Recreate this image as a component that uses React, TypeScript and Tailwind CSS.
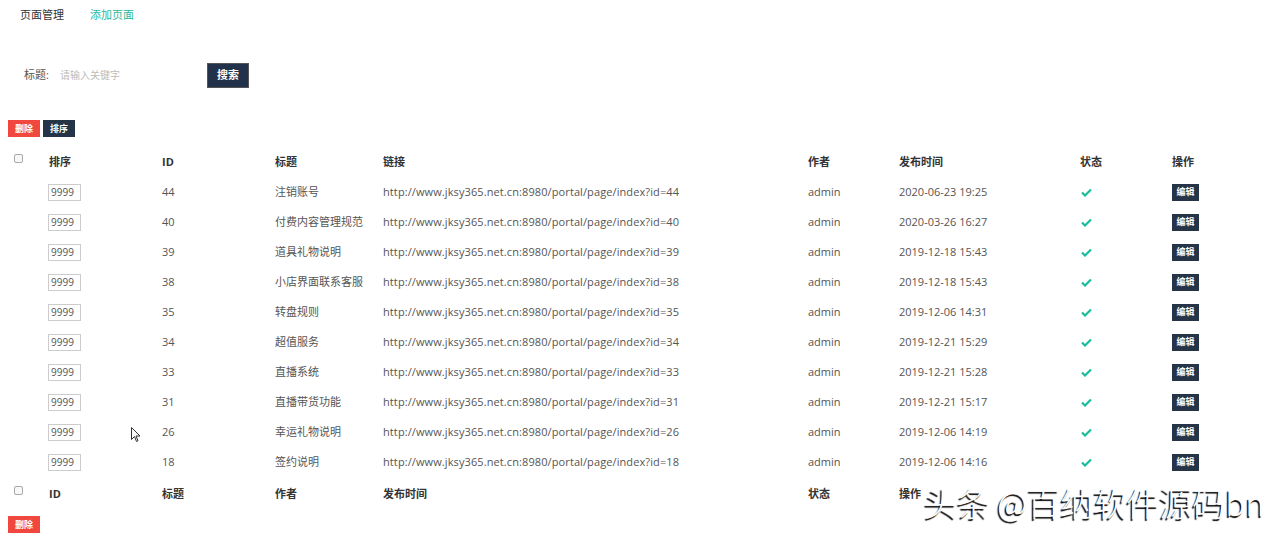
import React from 'react';

type Row = { id: number; title: string; date: string };

const rows: Row[] = [
  { id: 44, title: '注销账号', date: '2020-06-23 19:25' },
  { id: 40, title: '付费内容管理规范', date: '2020-03-26 16:27' },
  { id: 39, title: '道具礼物说明', date: '2019-12-18 15:43' },
  { id: 38, title: '小店界面联系客服', date: '2019-12-18 15:43' },
  { id: 35, title: '转盘规则', date: '2019-12-06 14:31' },
  { id: 34, title: '超值服务', date: '2019-12-21 15:29' },
  { id: 33, title: '直播系统', date: '2019-12-21 15:28' },
  { id: 31, title: '直播带货功能', date: '2019-12-21 15:17' },
  { id: 26, title: '幸运礼物说明', date: '2019-12-06 14:19' },
  { id: 18, title: '签约说明', date: '2019-12-06 14:16' },
];

const cols = 'grid grid-cols-[49px_113px_113px_108px_425px_91px_181px_92px_1fr] items-center';

const Check = () => (
  <span className="block w-[9px] h-[9px] border border-[#a9a9a9] rounded-[2px] bg-[#f7f7f7] ml-[14px] -mt-[8px]" />
);

const SmallBtn = ({ children, red }: { children: React.ReactNode; red?: boolean }) => (
  <span
    className={`inline-flex items-center justify-center h-[17px] w-[32px] text-[9px] font-bold text-white ${red ? 'bg-[#f0483e]' : 'bg-[#263447]'}`}
  >
    {children}
  </span>
);

export default function App() {
  return (
    <div className="relative w-[1280px] h-[546px] bg-white overflow-hidden text-[11px] text-[#555] font-['Open_Sans','Noto_Sans_CJK_SC',sans-serif]">
      {/* tabs */}
      <div className="flex gap-[26px] pl-[20px] pt-[7px] leading-[16px]">
        <span className="text-[#333]">页面管理</span>
        <span className="text-[#26b99a]">添加页面</span>
      </div>

      {/* search */}
      <div className="flex items-center mt-[40px] pl-[24px] h-[25px]">
        <span className="text-[#555] w-[36px]">标题:</span>
        <span className="text-[#bbb] text-[10px] w-[147px]">请输入关键字</span>
        <span className="inline-flex items-center justify-center w-[42px] h-[25px] bg-[#22324a] text-white font-bold border border-[#555]">搜索</span>
      </div>

      {/* actions */}
      <div className="flex gap-[3px] pl-[8px] mt-[32px]">
        <SmallBtn red>删除</SmallBtn>
        <SmallBtn>排序</SmallBtn>
      </div>

      {/* table */}
      <div className="mt-[10px]">
        <div className={`${cols} h-[30px] font-bold text-[#333]`}>
          <div><Check /></div>
          <div>排序</div>
          <div>ID</div>
          <div>标题</div>
          <div>链接</div>
          <div>作者</div>
          <div>发布时间</div>
          <div>状态</div>
          <div>操作</div>
        </div>
        {rows.map(r => (
          <div key={r.id} className={`${cols} h-[30px]`}>
            <div />
            <div>
              <span className="inline-flex items-center w-[33px] h-[17px] -ml-[1px] pl-[2px] border border-[#ccc] text-[10px] text-[#555]">9999</span>
            </div>
            <div>{r.id}</div>
            <div>{r.title}</div>
            <div className="tracking-[0.1px]">http://www.jksy365.net.cn:8980/portal/page/index?id={r.id}</div>
            <div>admin</div>
            <div>{r.date}</div>
            <div>
              <svg width="11" height="9" viewBox="0 0 11 9" className="ml-[1px]">
                <path d="M1 4.5 L4 7.5 L10 1.5" fill="none" stroke="#1abc9c" strokeWidth="2.2" />
              </svg>
            </div>
            <div>
              <span className="inline-flex items-center justify-center w-[27px] h-[17px] bg-[#263447] text-white text-[9px] font-bold">编辑</span>
            </div>
          </div>
        ))}
        <div className={`${cols} h-[34px] font-bold text-[#333]`}>
          <div><Check /></div>
          <div>ID</div>
          <div>标题</div>
          <div>作者</div>
          <div>发布时间</div>
          <div>状态</div>
          <div>操作</div>
        </div>
      </div>

      <div className="pl-[8px] mt-[5px]">
        <SmallBtn red>删除</SmallBtn>
      </div>

      {/* mouse cursor */}
      <svg className="absolute left-[131px] top-[427px]" width="10" height="16" viewBox="0 0 10 16">
        <path d="M0.5 0.5 L0.5 12.5 L3.5 9.5 L5.5 14.5 L7 13.8 L5 9 L9 9 Z" fill="#fff" stroke="#333" strokeWidth="1" />
      </svg>

      {/* watermark */}
      <div className="absolute left-[924px] top-[482px] text-[33px] leading-[40px] text-white font-light font-['Noto_Sans_CJK_SC',sans-serif] [text-shadow:-1.5px_1.5px_1px_#000]">
        头条 @百纳软件源码bn
      </div>
    </div>
  );
}
